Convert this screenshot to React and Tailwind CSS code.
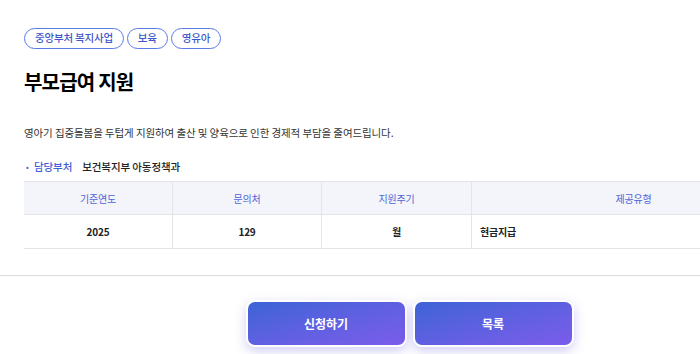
import React from "react";

const tags = ["중앙부처 복지사업", "보육", "영유아"];

const columns = [
  { label: "기준연도", value: "2025", w: "w-[149px]", center: true },
  { label: "문의처", value: "129", w: "w-[149px]", center: true },
  { label: "지원주기", value: "월", w: "w-[150px]", center: true },
  { label: "제공유형", value: "현금지급", w: "flex-1", center: false },
];

export default function App() {
  return (
    <div className="w-[700px] h-[354px] overflow-hidden bg-white font-['Noto_Sans_CJK_KR','Noto_Sans',sans-serif]">
      <div className="w-[819px]">
        <div className="px-6 pt-[28px]">
          {/* tags */}
          <div className="flex gap-[3px]">
            {tags.map((t) => (
              <span
                key={t}
                className="h-[21px] px-[10px] flex items-center rounded-full border border-[#5a7be6] text-[10.5px] leading-none tracking-[-0.2px] font-medium text-[#3f57c9]"
              >
                {t}
              </span>
            ))}
          </div>

          <h1 className="mt-[20px] text-[20px] leading-[26px] font-bold tracking-[-0.8px] text-black">
            부모급여 지원
          </h1>

          <p className="mt-[31px] text-[10.5px] leading-[14px] tracking-[-0.1px] text-[#333]">
            영아기 집중돌봄을 두텁게 지원하여 출산 및 양육으로 인한 경제적 부담을 줄여드립니다.
          </p>

          <div className="mt-[20px] flex items-center text-[10.5px] leading-[14px] tracking-[-0.1px]">
            <span className="w-[10px] pl-[2px] text-[8px] text-[#3f5fd6]">•</span>
            <span className="font-medium text-[#3f5fd6]">담당부처</span>
            <span className="ml-[10px] font-medium text-[#222]">보건복지부 아동정책과</span>
          </div>

          {/* table */}
          <div className="mt-[7px] border-t border-[#e3e4e8]">
            <div className="flex h-[33px] bg-[#f4f5fa] border-b border-[#e3e4e8]">
              {columns.map((c, i) => (
                <div
                  key={c.label}
                  className={`${c.w} flex items-center justify-center text-[10px] tracking-[-0.2px] text-[#4f63d8] ${
                    i < columns.length - 1 ? "border-r border-[#e3e4e8]" : ""
                  }`}
                >
                  {c.label}
                </div>
              ))}
            </div>
            <div className="flex h-[34px] border-b border-[#e3e4e8]">
              {columns.map((c, i) => (
                <div
                  key={c.label}
                  className={`${c.w} flex items-center ${
                    c.center ? "justify-center" : "justify-start pl-[8px]"
                  } text-[10px] font-semibold tracking-[-0.2px] text-[#222] ${
                    i < columns.length - 1 ? "border-r border-[#e3e4e8]" : ""
                  }`}
                >
                  {c.value}
                </div>
              ))}
            </div>
          </div>
        </div>

        <div className="mt-[26px] border-t border-[#dcdcdc]" />

        <div className="px-6 pt-[24px] flex justify-center gap-[6px]">
          <button className="w-[161px] h-[47px] rounded-[9px] border-2 border-white bg-gradient-to-br from-[#3b63d7] to-[#7b5ceb] shadow-[0_4px_12px_rgba(90,80,220,0.28)] text-white text-[12px] font-bold">
            신청하기
          </button>
          <button className="w-[161px] h-[47px] rounded-[9px] border-2 border-white bg-gradient-to-br from-[#3b63d7] to-[#7b5ceb] shadow-[0_4px_12px_rgba(90,80,220,0.28)] text-white text-[12px] font-bold">
            목록
          </button>
        </div>
      </div>
    </div>
  );
}
